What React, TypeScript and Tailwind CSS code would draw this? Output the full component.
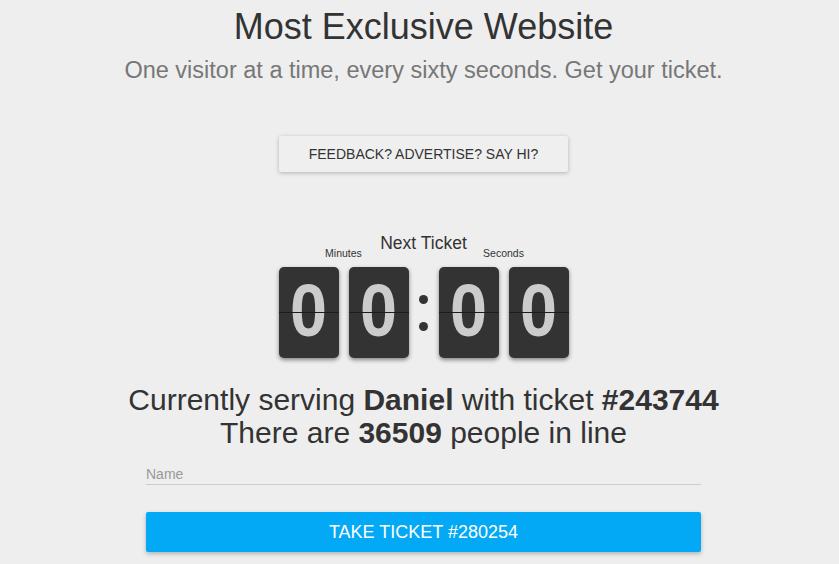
import React from "react";

function FlipCard({ digit }: { digit: string }) {
  return (
    <div className="relative flex h-[91px] w-[60px] items-center justify-center overflow-hidden rounded-[5px] bg-[#333] shadow-[0_2px_4px_rgba(0,0,0,0.45)]">
      <span className="mt-[-3px] block scale-x-[0.9] text-[74px] font-bold leading-none text-[#ccc]">{digit}</span>
      <div className="absolute inset-x-0 top-[45px] h-px bg-[#1c1c1c]" />
    </div>
  );
}

function Group({ label, digits }: { label: string; digits: string[] }) {
  return (
    <div className="flex flex-col items-center">
      <div className="h-[12px] text-[10.5px] leading-[12px] text-[#333]">{label}</div>
      <div className="mt-[8px] flex gap-[10px]">
        {digits.map((d, i) => (
          <FlipCard key={i} digit={d} />
        ))}
      </div>
    </div>
  );
}

export default function App() {
  return (
    <div className="min-h-[564px] bg-[#eeeeee] pl-[8px] text-[#333] [font-family:'Liberation_Sans',Arial,sans-serif]">
      <div className="flex flex-col items-center">
        <h1 className="mt-[7px] text-[36px] leading-[40px] text-[#333]">Most Exclusive Website</h1>
        <p className="mt-[8px] text-[23.5px] leading-[30px] text-[#777]">
          One visitor at a time, every sixty seconds. Get your ticket.
        </p>

        <button className="mt-[51px] h-[36px] w-[289px] rounded-[2px] bg-[#efefef] text-[14px] uppercase text-[#333] shadow-[0_1px_4px_rgba(0,0,0,0.25)]">
          Feedback? Advertise? Say Hi?
        </button>

        <div className="mt-[61px] text-[17.5px] leading-[20px] text-[#333]">Next Ticket</div>
        <div className="mt-[-6px] flex items-end">
          <Group label="Minutes" digits={["0", "0"]} />
          <div className="flex h-[91px] w-[30px] flex-col items-center justify-center gap-[18px]">
            <span className="h-[9px] w-[9px] rounded-full bg-[#333]" />
            <span className="h-[9px] w-[9px] rounded-full bg-[#333]" />
          </div>
          <Group label="Seconds" digits={["0", "0"]} />
        </div>

        <div className="mt-[25px] text-center text-[30px] leading-[33px] text-[#333]">
          <div>
            Currently serving <b>Daniel</b> with ticket <b>#243744</b>
          </div>
          <div>
            There are <b>36509</b> people in line
          </div>
        </div>

        <input
          placeholder="Name"
          className="mt-[11px] h-[25px] w-[555px] border-b border-[#ccc] bg-transparent pt-[3px] text-[14px] text-[#333] outline-none placeholder:text-[#999]"
        />

        <button className="mt-[27px] h-[40px] w-[555px] rounded-[2px] bg-[#03a9f4] text-[18px] uppercase text-white shadow-[0_2px_4px_rgba(0,0,0,0.25)]">
          Take Ticket #280254
        </button>
      </div>
    </div>
  );
}
